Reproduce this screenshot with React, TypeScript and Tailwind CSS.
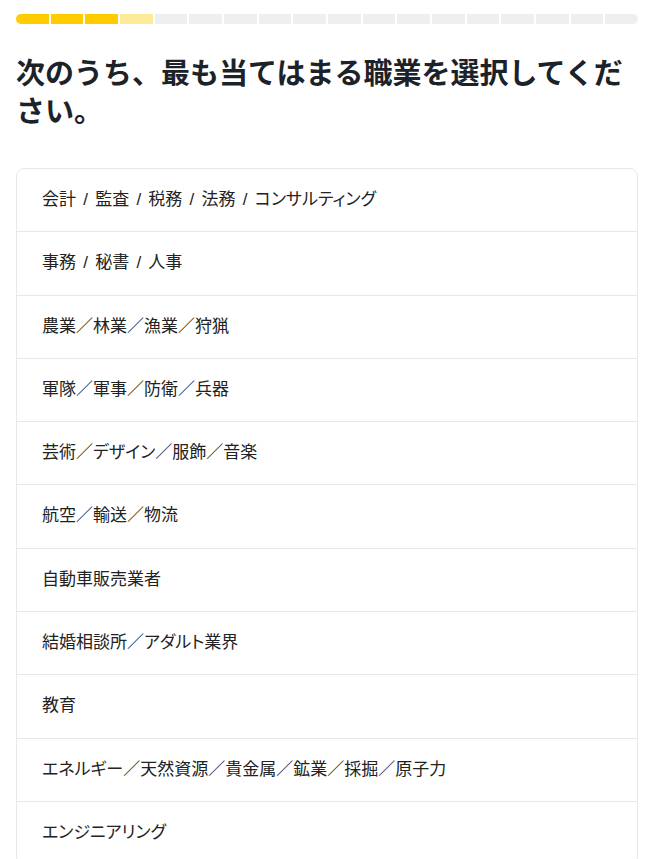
const occupations = [
  '会計 / 監査 / 税務 / 法務 / コンサルティング',
  '事務 / 秘書 / 人事',
  '農業／林業／漁業／狩猟',
  '軍隊／軍事／防衛／兵器',
  '芸術／デザイン／服飾／音楽',
  '航空／輸送／物流',
  '自動車販売業者',
  '結婚相談所／アダルト業界',
  '教育',
  'エネルギー／天然資源／貴金属／鉱業／採掘／原子力',
  'エンジニアリング',
]

const TOTAL_STEPS = 18

export default function App() {
  return (
    <div className="min-h-screen bg-white px-4 pt-[14px] font-['Noto_Sans_CJK_JP','Noto_Sans',sans-serif]">
      {/* Progress */}
      <div className="flex h-[10px] gap-[2px] overflow-hidden rounded-full">
        {Array.from({ length: TOTAL_STEPS }).map((_, i) => (
          <div
            key={i}
            className={
              i < 3
                ? 'flex-1 bg-[#ffcc00]'
                : i === 3
                  ? 'flex-1 bg-[#feeb99]'
                  : 'flex-1 bg-[#eeeff0]'
            }
          />
        ))}
      </div>

      {/* Question */}
      <h1 className="mt-[28px] text-[29px] font-bold leading-[38px] text-[#1c2328]">
        次のうち、最も当てはまる職業を選択してください。
      </h1>

      {/* Options */}
      <div className="mt-[40px] overflow-hidden rounded-lg border border-[#e8e8e8]">
        {occupations.map((label, i) => (
          <button
            key={label}
            className={
              "block w-full px-[25px] py-5 text-left font-['Liberation_Sans','Noto_Sans_CJK_JP',sans-serif] text-[17px] leading-[22.3px] text-[#222] [font-feature-settings:'palt'_1] [word-spacing:2.5px] " +
              (i > 0 ? 'border-t border-[#e8e8e8]' : '')
            }
          >
            {label}
          </button>
        ))}
      </div>
    </div>
  )
}
